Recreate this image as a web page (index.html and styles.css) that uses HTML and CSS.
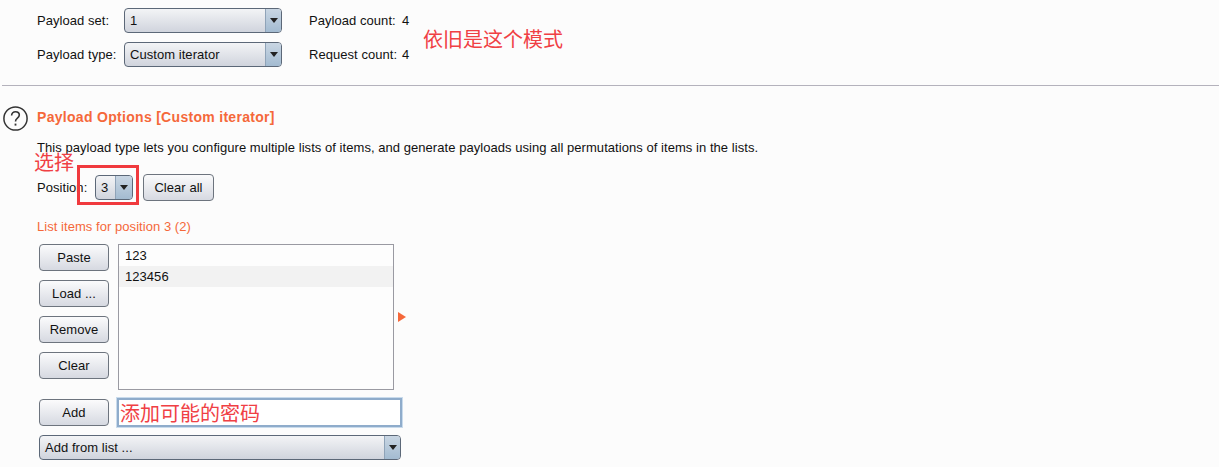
FILE: index.html
```html
<!DOCTYPE html>
<html lang="zh">
<head>
    <meta charset="UTF-8">
    <title>Payload Options</title>
    <link rel="stylesheet" href="styles.css">
</head>
<body>
    <div class="top">
        <div class="top-row">
            <span class="top-label">Payload set:</span>
            <div class="combo combo-top"><span class="combo-text">1</span><span class="combo-btn"><i class="caret"></i></span></div>
            <span class="count-label">Payload count:</span>
            <span>4</span>
        </div>
        <div class="top-row">
            <span class="top-label">Payload type:</span>
            <div class="combo combo-top"><span class="combo-text">Custom iterator</span><span class="combo-btn"><i class="caret"></i></span></div>
            <span class="count-label">Request count:</span>
            <span>4</span>
        </div>
        <div class="note note-mode">依旧是这个模式</div>
    </div>

    <div class="options">
        <div class="heading-row">
            <svg class="help" width="25" height="25" viewBox="0 0 25 25">
                <circle cx="12.5" cy="12.5" r="11.6" fill="none" stroke="#333" stroke-width="1.5"/>
                <path d="M8.6 9.6c0-2.5 1.7-3.9 3.9-3.9s3.8 1.3 3.8 3.4c0 1.7-1 2.5-2.1 3.3-1.1.8-1.7 1.4-1.7 3" fill="none" stroke="#333" stroke-width="1.6"/>
                <rect x="11.6" y="17.6" width="1.8" height="2" fill="#333"/>
            </svg>
            <h2>Payload Options [Custom iterator]</h2>
        </div>
        <p class="desc">This payload type lets you configure multiple lists of items, and generate payloads using all permutations of items in the lists.</p>

        <div class="position-row">
            <span class="position-label">Position:</span>
            <div class="combo combo-small"><span class="combo-text">3</span><span class="combo-btn combo-btn-wide"><i class="caret"></i></span></div>
            <button class="btn btn-clear-all">Clear all</button>
            <div class="note note-select">选择</div>
            <div class="red-box"></div>
        </div>

        <div class="list-title">List items for position 3 (2)</div>

        <div class="editor">
            <div class="btn-col">
                <button class="btn">Paste</button>
                <button class="btn">Load ...</button>
                <button class="btn">Remove</button>
                <button class="btn">Clear</button>
            </div>
            <div class="listbox">
                <div class="list-item">123</div>
                <div class="list-item list-item-alt">123456</div>
            </div>
            <i class="expand-arrow"></i>
        </div>

        <div class="add-row">
            <button class="btn">Add</button>
            <div class="add-input">添加可能的密码</div>
        </div>

        <div class="combo combo-wide"><span class="combo-text">Add from list ...</span><span class="combo-btn"><i class="caret"></i></span></div>
    </div>
</body>
</html>
```

FILE: styles.css
```css
html, body {
    margin: 0;
    height: 467px;
    overflow: hidden;
}
body {
    font-family: "Liberation Sans", Arial, "Noto Sans CJK SC", sans-serif;
    font-size: 13px;
    letter-spacing: 0.05px;
    color: #111;
    background-color: #fcfcfc;
}
.top {
    position: relative;
    display: flex;
    flex-direction: column;
    gap: 9px;
    padding: 8px 0 18px 37px;
}
.top-row {
    display: flex;
    align-items: center;
    height: 25px;
}
.top-label {
    width: 87px;
}
.count-label {
    width: 93px;
    margin-left: 27px;
}
.note {
    position: absolute;
    font-family: "Noto Sans CJK SC", sans-serif;
    font-size: 20px;
    line-height: 26px;
    letter-spacing: 0;
    color: #f04044;
}
.note-mode {
    left: 423px;
    top: 26px;
}
.note-select {
    left: -3px;
    top: -25px;
}
.combo {
    display: flex;
    box-sizing: border-box;
    height: 25px;
    border: 1px solid #5c6878;
    border-radius: 4px;
    background: linear-gradient(#f3f4f6, #d0d4dd);
    overflow: hidden;
}
.combo-top {
    width: 158px;
}
.combo-small {
    width: 38px;
}
.combo-wide {
    width: 362px;
    margin: 9px 0 0 2px;
}
.combo-text {
    flex: 1;
    padding-left: 5px;
    line-height: 23px;
}
.combo-btn {
    display: flex;
    align-items: center;
    justify-content: center;
    width: 15px;
    border-left: 1px solid #8fa3b8;
    background: linear-gradient(#c9d6e3, #a3bbd1);
}
.combo-btn-wide {
    width: 16px;
}
.caret {
    width: 0;
    height: 0;
    border-left: 4px solid transparent;
    border-right: 4px solid transparent;
    border-top: 5px solid #222;
}
.options {
    border-top: 1px solid #b4b2bc;
    margin-left: 2px;
    padding: 20px 0 0 35px;
}
.heading-row {
    display: flex;
    align-items: center;
    height: 25px;
}
.help {
    margin-left: -34px;
    margin-right: 9px;
}
h2 {
    margin: 0 0 4px;
    font-size: 14px;
    letter-spacing: 0.3px;
    color: #f5683a;
}
.desc {
    margin: 9px 0 0;
    line-height: 16px;
}
.position-row {
    position: relative;
    display: flex;
    align-items: center;
    height: 27px;
    margin-top: 18px;
}
.position-label {
    width: 58px;
}
.red-box {
    position: absolute;
    left: 40px;
    top: -9px;
    width: 56px;
    height: 34px;
    border: 3px solid #f03a3e;
}
.btn {
    box-sizing: border-box;
    width: 70px;
    height: 27px;
    padding: 0;
    font-family: inherit;
    font-size: 13px;
    letter-spacing: 0.05px;
    color: #111;
    border: 1px solid #6d747e;
    border-radius: 4px;
    background: linear-gradient(#fbfbfc, #d6d9e1);
}
.btn-clear-all {
    width: 71px;
    margin-left: 10px;
}
.list-title {
    margin-top: 18px;
    line-height: 16px;
    color: #f5683a;
}
.editor {
    display: flex;
    align-items: center;
    margin: 9px 0 0 2px;
}
.btn-col {
    display: flex;
    flex-direction: column;
    gap: 9px;
    align-self: flex-start;
}
.listbox {
    box-sizing: border-box;
    width: 276px;
    height: 146px;
    margin-left: 9px;
    border: 1px solid #9a9aa2;
    background: #fdfdfd;
}
.list-item {
    height: 21px;
    padding-left: 6px;
    line-height: 21px;
}
.list-item-alt {
    background: #f2f2f2;
}
.expand-arrow {
    width: 0;
    height: 0;
    margin-left: 4px;
    border-top: 5px solid transparent;
    border-bottom: 5px solid transparent;
    border-left: 8px solid #f5683a;
}
.add-row {
    display: flex;
    align-items: center;
    height: 27px;
    margin: 9px 0 0 2px;
}
.add-input {
    box-sizing: border-box;
    width: 285px;
    height: 29px;
    margin-left: 8px;
    padding-left: 1px;
    border: 2px solid #8faccb;
    box-shadow: 0 0 0 1px #c9dbec;
    background: #fff;
    font-family: "Noto Sans CJK SC", sans-serif;
    font-size: 20px;
    line-height: 26px;
    letter-spacing: 0;
    color: #f04044;
}
```
